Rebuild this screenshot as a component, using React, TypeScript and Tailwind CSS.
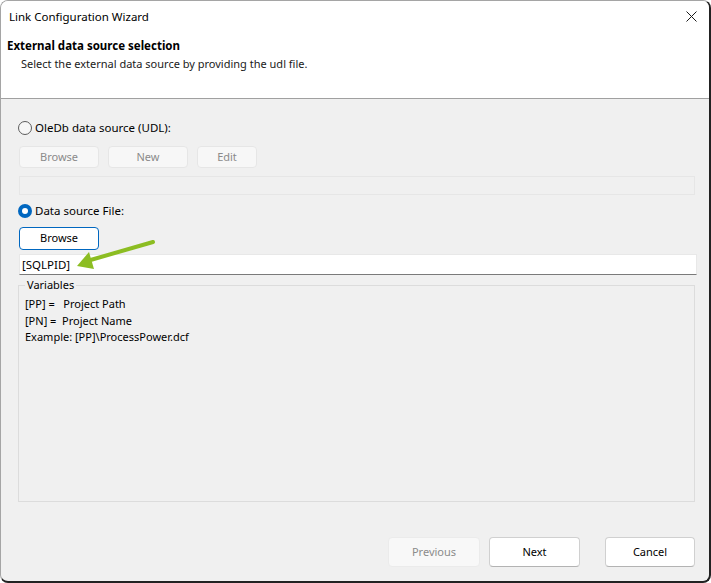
import React from "react";

const font = { fontFamily: '"Noto Sans", "Open Sans", Arial, sans-serif' };

function Radio({ checked }: { checked?: boolean }) {
  if (checked) {
    return (
      <span className="flex h-[14px] w-[14px] items-center justify-center rounded-full bg-[#0067c0]">
        <span className="h-[6px] w-[6px] rounded-full bg-white" />
      </span>
    );
  }
  return <span className="h-[14px] w-[14px] rounded-full border border-[#5c5c5c] bg-[#f7f7f7]" />;
}

function SmallButton({ label, width, disabled, focused }: { label: string; width: string; disabled?: boolean; focused?: boolean }) {
  const cls = disabled
    ? "border-[#e6e6e6] bg-[#f7f7f7] text-[#8b8b8b]"
    : focused
    ? "border-[#0067c0] bg-white text-black"
    : "border-[#d0d0d0] border-b-[#b5b5b5] bg-white text-black";
  return (
    <div className={`flex items-center justify-center rounded-[4px] border text-[11px] ${width} ${cls}`}>
      {label}
    </div>
  );
}

export default function App() {
  return (
    <div
      className="relative flex h-[583px] w-[711px] flex-col overflow-hidden rounded-[8px] border border-[#a5a5a5] border-r-[2px] border-b-[2px] border-r-[#222] border-b-[#222] bg-[#f0f0f0] text-[11px] text-black"
      style={font}
    >
      {/* header */}
      <div className="flex h-[98px] shrink-0 flex-col border-b border-[#a0a0a0] bg-white">
        <div className="flex h-[31px] items-center justify-between pl-[8px] pr-[10px] text-[11.5px]">
          <span>Link Configuration Wizard</span>
          <svg width="11" height="11" viewBox="0 0 11 11" className="mr-[2px]">
            <path d="M0.5 0.5 L10.5 10.5 M10.5 0.5 L0.5 10.5" stroke="#1a1a1a" strokeWidth="1" />
          </svg>
        </div>
        <div className="mt-[6px] pl-[6px] text-[11.5px] font-bold leading-[16px]">External data source selection</div>
        <div className="mt-[2px] pl-[20px] leading-[16px] text-[#1a1a1a]">
          Select the external data source by providing the udl file.
        </div>
      </div>

      {/* body */}
      <div className="flex flex-1 flex-col px-[17px]">
        <div className="mt-[22px] flex h-[14px] items-center gap-[3px] text-[11.5px]">
          <Radio />
          <span>OleDb data source (UDL):</span>
        </div>
        <div className="mt-[11px] flex h-[22px] gap-[9px] pl-[1px]">
          <SmallButton label="Browse" width="w-[80px]" disabled />
          <SmallButton label="New" width="w-[80px]" disabled />
          <SmallButton label="Edit" width="w-[60px]" disabled />
        </div>
        <div className="ml-[1px] mt-[8px] h-[19px] w-[676px] border border-[#e6e6e6] bg-[#f0f0f0]" />

        <div className="mt-[9px] flex h-[14px] items-center gap-[3px] text-[11.5px]">
          <Radio checked />
          <span>Data source File:</span>
        </div>
        <div className="mt-[9px] flex h-[23px] pl-[1px]">
          <SmallButton label="Browse" width="w-[80px]" focused />
        </div>
        <div className="ml-[1px] mt-[4px] flex h-[21px] w-[678px] items-center border border-[#e8e8e8] border-b-[#7a7a7a] bg-white pl-[2px] text-[11.5px]">
          [SQLPID]
        </div>

        <div className="relative mt-[10px] h-[217px] w-[677px] border border-[#dcdcdc]">
          <span className="absolute left-[6px] top-[-9px] bg-[#f0f0f0] px-[2px] leading-[16px]">Variables</span>
          <div className="mt-[10px] flex flex-col pl-[6px] leading-[16.5px]">
            <span className="whitespace-pre">[PP] =   Project Path</span>
            <span className="whitespace-pre">[PN] =  Project Name</span>
            <span>Example: [PP]\ProcessPower.dcf</span>
          </div>
        </div>

        <div className="mt-auto mb-[14px] flex h-[30px] justify-end">
          <div className="flex w-[92px] items-center justify-center rounded-[4px] border border-[#ebebeb] bg-[#f8f8f8] text-[#8b8b8b]">
            Previous
          </div>
          <div className="ml-[9px] flex w-[91px] items-center justify-center rounded-[4px] border border-[#d0d0d0] border-b-[#b3b3b3] bg-white">
            Next
          </div>
          <div className="ml-[25px] mr-[-3px] flex w-[90px] items-center justify-center rounded-[4px] border border-[#d0d0d0] border-b-[#b3b3b3] bg-white">
            Cancel
          </div>
        </div>
      </div>

      {/* annotation arrow */}
      <svg className="absolute left-[70px] top-[235px]" width="90" height="36" viewBox="0 0 90 36">
        <path d="M82 6 L16 25" stroke="#8cbd22" strokeWidth="4" strokeLinecap="round" />
        <path d="M6 30 L18 16 L23 33 Z" fill="#8cbd22" />
      </svg>
    </div>
  );
}
